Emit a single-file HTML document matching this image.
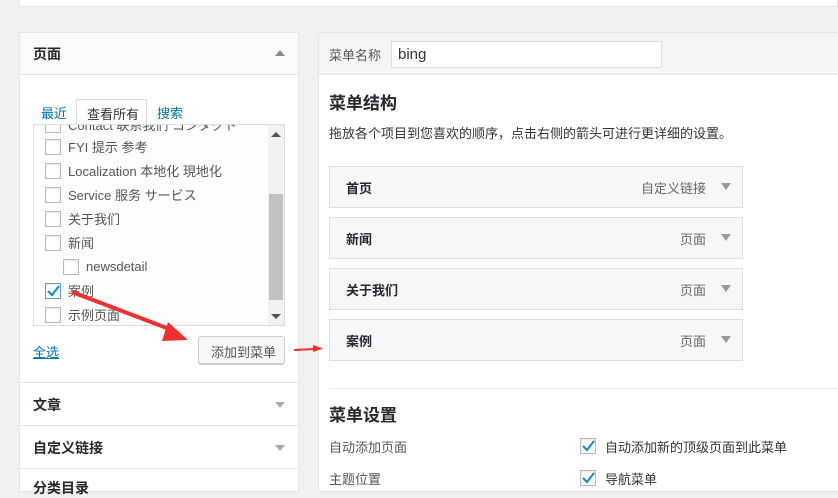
<!DOCTYPE html>
<html><head><meta charset="utf-8"><style>
*{box-sizing:border-box;margin:0;padding:0}
body{width:838px;height:486px;overflow:hidden;background:#f1f1f1;font-family:"Liberation Sans","Noto Sans CJK SC",sans-serif;font-size:13px;color:#444;position:relative}
.abs{position:absolute}
.cb{position:absolute;width:16px;height:16px;border:1px solid #b4b9be;background:#fff;box-shadow:inset 0 1px 2px rgba(0,0,0,.1)}
.tri{position:absolute;width:0;height:0;border-left:5px solid transparent;border-right:5px solid transparent}
.item{position:absolute;left:329px;width:414px;height:42px;background:#f7f7f7;border:1px solid #dfdfdf}
.item b{position:absolute;left:16px;top:11px;font-size:13px;color:#23282d}
.item span{position:absolute;right:36px;top:11px;color:#666}
.item i{position:absolute;right:11px;top:16px;border-left:5px solid transparent;border-right:5px solid transparent;border-top:7px solid #999}
</style></head><body>
<div class="abs" style="left:19px;top:0;width:819px;height:7px;background:#fff;border:1px solid #e5e5e5;border-top:0"></div>

<!-- left panel -->
<div class="abs" style="left:19px;top:32px;width:280px;height:460px;background:#fff;border:1px solid #e5e5e5"></div>
<div class="abs" style="left:19px;top:32px;width:280px;height:43px;background:#fafafa;border:1px solid #e5e5e5"></div>
<div class="abs" style="left:33px;top:44px;font-size:14px;font-weight:bold;color:#23282d">页面</div>
<div class="tri" style="left:275px;top:50px;border-bottom:6px solid #888"></div>
<div class="abs" style="left:41px;top:103px;color:#0073aa">最近</div>
<div class="abs" style="left:76px;top:99px;width:71px;height:26px;border:1px solid #ddd;border-bottom:0;background:#fff;padding:4px 0 0 10px;color:#333">查看所有</div>
<div class="abs" style="left:157px;top:103px;color:#0073aa">搜索</div>
<div class="abs" style="left:33px;top:124px;width:252px;height:202px;border:1px solid #ddd;background:#fdfdfd;overflow:hidden">
 <div class="abs" style="left:234px;top:0;width:16px;height:200px;background:#f1f1f1"></div>
 <div class="abs" style="left:235px;top:69px;width:14px;height:106px;background:#c1c1c1"></div>
 <div class="tri" style="left:237px;top:7px;border-bottom:5px solid #555"></div>
 <div class="tri" style="left:237px;top:189px;border-top:5px solid #555"></div>
 <div class="cb" style="left:11px;top:-8px"></div><div class="abs" style="left:34px;top:-10px;color:#555">Contact 联系我们 コンタクト</div>
 <div class="cb" style="left:11px;top:14px"></div><div class="abs" style="left:34px;top:12px;color:#555">FYI 提示 参考</div>
 <div class="cb" style="left:11px;top:38px"></div><div class="abs" style="left:34px;top:36px;color:#555">Localization 本地化 現地化</div>
 <div class="cb" style="left:11px;top:62px"></div><div class="abs" style="left:34px;top:60px;color:#555">Service 服务 サービス</div>
 <div class="cb" style="left:11px;top:86px"></div><div class="abs" style="left:34px;top:84px;color:#555">关于我们</div>
 <div class="cb" style="left:11px;top:110px"></div><div class="abs" style="left:34px;top:108px;color:#555">新闻</div>
 <div class="cb" style="left:29px;top:134px"></div><div class="abs" style="left:52px;top:134px;color:#555">newsdetail</div>
 <div class="cb" style="left:11px;top:158px;border-color:#5b9dd9"><svg width="14" height="14" style="position:absolute;left:0;top:0"><path d="M2 7 L6 11 L13 2" stroke="#1e8cbe" stroke-width="2.2" fill="none"/></svg></div><div class="abs" style="left:34px;top:156px;color:#555">案例</div>
 <div class="cb" style="left:11px;top:182px"></div><div class="abs" style="left:34px;top:180px;color:#555">示例页面</div>
</div>
<div class="abs" style="left:33px;top:342px;color:#0073aa;text-decoration:underline">全选</div>
<div class="abs" style="left:198px;top:336px;width:87px;height:28px;border:1px solid #ccc;border-radius:3px;background:#f7f7f7;box-shadow:0 1px 0 #ccc;padding:5px 0 0 12px;color:#555">添加到菜单</div>
<div class="abs" style="left:19px;top:382px;width:280px;height:1px;background:#e5e5e5"></div>
<div class="abs" style="left:33px;top:395px;font-size:14px;font-weight:bold;color:#23282d">文章</div>
<div class="tri" style="left:275px;top:402px;border-top:6px solid #aaa"></div>
<div class="abs" style="left:19px;top:425px;width:280px;height:1px;background:#e5e5e5"></div>
<div class="abs" style="left:33px;top:438px;font-size:14px;font-weight:bold;color:#23282d">自定义链接</div>
<div class="tri" style="left:275px;top:445px;border-top:6px solid #aaa"></div>
<div class="abs" style="left:19px;top:468px;width:280px;height:1px;background:#e5e5e5"></div>
<div class="abs" style="left:33px;top:478px;font-size:14px;font-weight:bold;color:#23282d">分类目录</div>

<!-- right panel -->
<div class="abs" style="left:318px;top:32px;width:530px;height:460px;background:#fff;border:1px solid #e5e5e5"></div>
<div class="abs" style="left:318px;top:32px;width:530px;height:43px;background:#f5f5f5;border:1px solid #e5e5e5"></div>
<div class="abs" style="left:329px;top:45px;color:#555">菜单名称</div>
<div class="abs" style="left:391px;top:41px;width:271px;height:27px;border:1px solid #ddd;background:#fff;padding:4px 0 0 6px;font-size:15px;color:#333;line-height:18px">bing</div>
<div class="abs" style="left:329px;top:89px;font-size:17px;font-weight:bold;color:#23282d">菜单结构</div>
<div class="abs" style="left:329px;top:123px;color:#333">拖放各个项目到您喜欢的顺序，点击右侧的箭头可进行更详细的设置。</div>
<div class="item" style="top:166px"><b>首页</b><span>自定义链接</span><i></i></div>
<div class="item" style="top:217px"><b>新闻</b><span>页面</span><i></i></div>
<div class="item" style="top:268px"><b>关于我们</b><span>页面</span><i></i></div>
<div class="item" style="top:319px"><b>案例</b><span>页面</span><i></i></div>
<div class="abs" style="left:329px;top:388px;width:509px;height:1px;background:#eee"></div>
<div class="abs" style="left:329px;top:401px;font-size:17px;font-weight:bold;color:#23282d">菜单设置</div>
<div class="abs" style="left:329px;top:437px;color:#555">自动添加页面</div>
<div class="abs" style="left:329px;top:469px;color:#555">主题位置</div>
<div class="cb" style="left:580px;top:438px"><svg width="14" height="14" style="position:absolute;left:0;top:0"><path d="M2 7 L6 11 L13 2" stroke="#1e8cbe" stroke-width="2.2" fill="none"/></svg></div>
<div class="abs" style="left:605px;top:437px;color:#333">自动添加新的顶级页面到此菜单</div>
<div class="cb" style="left:580px;top:470px"><svg width="14" height="14" style="position:absolute;left:0;top:0"><path d="M2 7 L6 11 L13 2" stroke="#1e8cbe" stroke-width="2.2" fill="none"/></svg></div>
<div class="abs" style="left:605px;top:469px;color:#333">导航菜单</div>

<svg class="abs" style="left:0;top:0" width="838" height="486">
<path d="M72 292 L172 330" stroke="#f03030" stroke-width="4" fill="none"/>
<path d="M168 322 L188 340 L162 341 Z" fill="#f03030"/>
<path d="M294 350 L315 349" stroke="#f03030" stroke-width="2" fill="none"/>
<path d="M313 345 L323 348.5 L313 352 Z" fill="#f03030"/>
</svg>
</body></html>
